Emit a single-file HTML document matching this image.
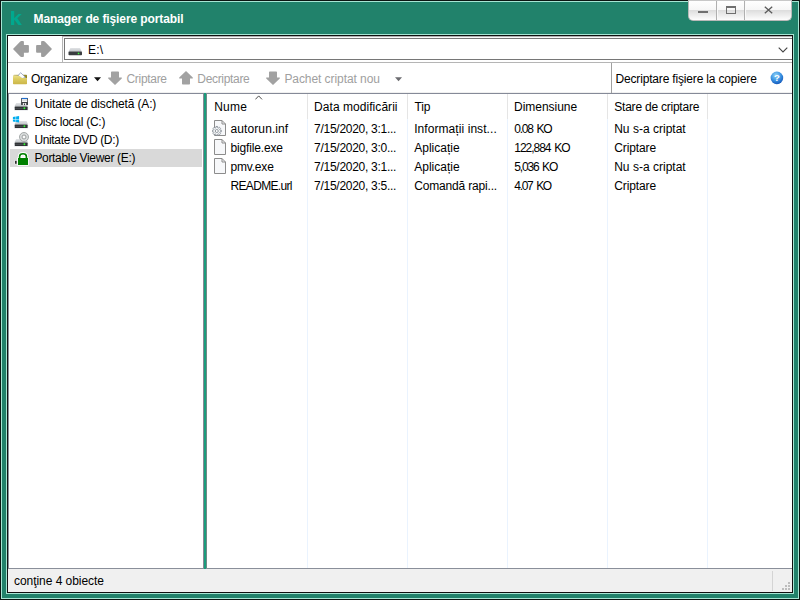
<!DOCTYPE html>
<html lang="ro"><head><meta charset="utf-8"><title>Manager de fişiere portabil</title>
<style>
html,body{margin:0;padding:0}
body{width:800px;height:600px;position:relative;overflow:hidden;background:#21826b;font:12px "Liberation Sans",sans-serif;color:#000}
div,span,svg{position:absolute;box-sizing:border-box}
.t{white-space:pre;line-height:14px;height:14px;font-size:12px}
.outer{left:0;top:0;width:800px;height:600px;border:1px solid #0c1512}
.outer2{left:1px;top:1px;width:798px;height:598px;border:1px solid #a6e6d4}
.frame2{left:6px;top:34px;width:788px;height:560px;border:1px solid #a6e6d4}
.frame{left:7px;top:35px;width:786px;height:558px;border:1px solid #101010;background:#fff}
.client{left:8px;top:36px;width:784px;height:556px;background:#fff;overflow:hidden}
.cap{left:688px;top:0;width:104px;height:21px;border:1px solid #b9b9b9;border-top-color:#c8c8c8;border-radius:0 0 5px 5px;background:linear-gradient(#fff 0,#f6f6f6 48%,#dedede 50%,#fdfdfd 100%)}
.vs{width:2px;background:linear-gradient(90deg,#b0b0b0 50%,#fafafa 50%);top:0;height:19px}
</style></head>
<body>
<div class="outer"></div><div class="outer2"></div>
<div class="frame2"></div><div class="frame"></div>
<div class="client">
  <!-- nav bar (coords relative to client: x-8, y-36) -->
  <div style="left:55px;top:0;width:729px;height:26px;background:#fafafa"></div><div style="left:55px;top:0;width:729px;height:1px;background:#b2b2b2"></div>
  <div style="left:0;top:26px;width:55px;height:1px;background:#b5b5b5"></div>
  <div style="left:54px;top:0;width:1px;height:27px;background:#b4b4b4"></div>
  <div style="left:55px;top:24px;width:729px;height:2px;background:#fff"></div>
  <div style="left:55px;top:26px;width:729px;height:1px;background:#b5b5b5"></div>
  <div style="left:56px;top:2px;width:729px;height:22px;background:#fff;border:1px solid #767676"></div>
  <!-- back/forward arrows -->
  <svg style="left:5px;top:5px" width="16" height="16" viewBox="0 0 16 16"><path d="M0 8 L7 0.7 Q7.7 0 8.4 0 H10 Q10.9 0 10.9 0.9 V4.1 H15 Q15.9 4.1 15.9 5 V10.8 Q15.9 11.7 15 11.7 H10.9 V15 Q10.9 15.9 10 15.9 H8.4 Q7.7 15.9 7 15.2 Z" fill="#9d9d9d"/></svg>
  <svg style="left:28px;top:5px" width="16" height="16" viewBox="0 0 16 16"><path transform="translate(16,0) scale(-1,1)" d="M0 8 L7 0.7 Q7.7 0 8.4 0 H10 Q10.9 0 10.9 0.9 V4.1 H15 Q15.9 4.1 15.9 5 V10.8 Q15.9 11.7 15 11.7 H10.9 V15 Q10.9 15.9 10 15.9 H8.4 Q7.7 15.9 7 15.2 Z" fill="#9d9d9d"/></svg>
  <!-- drive icon in address -->
  <svg style="left:60px;top:11px" width="15" height="9" viewBox="0 0 15 9"><defs><linearGradient id="dg" x1="0" y1="0" x2="0" y2="1"><stop offset="0" stop-color="#e2e4e6"/><stop offset="1" stop-color="#bfc3c7"/></linearGradient></defs><path d="M2.4 0.9 H12 L13.9 4.8 H0.6 Z" fill="url(#dg)"/><rect x="0.5" y="4.6" width="13.5" height="3.6" rx="0.8" fill="#3a3d40"/><rect x="9.8" y="5.7" width="1.5" height="1.5" fill="#3dff3d"/></svg>
  <!-- chevron -->
  <svg style="left:770px;top:11px" width="10" height="6" viewBox="0 0 10 6"><path d="M0.7 0.7 L5 5 L9.3 0.7" fill="none" stroke="#444" stroke-width="1.1"/></svg>

  <!-- toolbar -->
  <div style="left:0;top:56px;width:784px;height:1px;background:#f0f0f0"></div>
  <div style="left:0;top:57px;width:784px;height:1px;background:#858a98"></div>
  <div style="left:603px;top:27px;width:1px;height:30px;background:#a0a0a0"></div>
  <!-- folder icon -->
  <svg style="left:5px;top:35.5px" width="15" height="13" viewBox="0 0 15 13"><defs><linearGradient id="fg" x1="0" y1="0" x2="0" y2="1"><stop offset="0" stop-color="#ebdf86"/><stop offset="0.35" stop-color="#ddcd62"/><stop offset="1" stop-color="#cbb548"/></linearGradient></defs><linearGradient id="fb" x1="0" y1="0" x2="1" y2="0"><stop offset="0" stop-color="#d9d094"/><stop offset="0.5" stop-color="#b5a84a"/><stop offset="1" stop-color="#8c8122"/></linearGradient><path d="M0.3 3.5 Q0.3 2.8 1 2.8 H13.2 Q14 2.8 14 3.6 V11.5 H0.3 Z" fill="url(#fb)"/><path d="M5.2 3.7 L7.6 0.6 L12.4 5.4 L9 6.6 Z" fill="#fff" stroke="#8f9fc0" stroke-width="0.8"/><path d="M0 3.9 H6.6 L8.8 6 H14 V11.6 Q14 12.3 13.3 12.3 H0.7 Q0 12.3 0 11.6 Z" fill="url(#fg)"/></svg>
  <!-- dropdown arrow black -->
  <svg style="left:86px;top:41px" width="7" height="5" viewBox="0 0 7 5"><path d="M0 0.2 H7 L3.5 4.2 Z" fill="#111"/></svg>
  <!-- down arrow (Criptare) -->
  <svg style="left:100px;top:34.5px" width="14" height="14" viewBox="0 0 14 14"><path d="M3.8 0.4 H10.2 Q11 0.4 11 1.2 V6.6 H13.8 V7.6 L7 14 L0.2 7.6 V6.6 H3 V1.2 Q3 0.4 3.8 0.4 Z" fill="#a2a2a2"/></svg>
  <!-- up arrow (Decriptare) -->
  <svg style="left:171px;top:34.5px" width="14" height="14" viewBox="0 0 14 14"><path transform="translate(0,14) scale(1,-1)" d="M3.8 0.4 H10.2 Q11 0.4 11 1.2 V6.6 H13.8 V7.6 L7 14 L0.2 7.6 V6.6 H3 V1.2 Q3 0.4 3.8 0.4 Z" fill="#a2a2a2"/></svg>
  <!-- down arrow (Pachet) -->
  <svg style="left:258px;top:34.5px" width="14" height="14" viewBox="0 0 14 14"><path d="M3.8 0.4 H10.2 Q11 0.4 11 1.2 V6.6 H13.8 V7.6 L7 14 L0.2 7.6 V6.6 H3 V1.2 Q3 0.4 3.8 0.4 Z" fill="#a2a2a2"/></svg>
  <svg style="left:387px;top:41px" width="7" height="5" viewBox="0 0 7 5"><path d="M0 0.2 H7 L3.5 4.2 Z" fill="#6c6c70"/></svg>
  <!-- help icon -->
  <svg style="left:762px;top:34.6px" width="14" height="14" viewBox="0 0 14 14"><defs><radialGradient id="hg" cx="0.42" cy="0.3" r="0.75"><stop offset="0" stop-color="#8fd2f6"/><stop offset="0.55" stop-color="#3a92e2"/><stop offset="1" stop-color="#0e50b4"/></radialGradient></defs><circle cx="6.9" cy="6.9" r="6.3" fill="url(#hg)"/><text x="6.9" y="10.1" text-anchor="middle" font-family="Liberation Sans, sans-serif" font-weight="bold" font-size="9.6" fill="#fff">?</text></svg>

  <!-- tree panel -->
  <div style="left:0;top:58px;width:1px;height:474px;background:#8a8f9a"></div>
  <div style="left:2px;top:113px;width:192px;height:18px;background:#d9d9d9"></div>
  <!-- splitter -->
  <div style="left:195px;top:58px;width:1px;height:474px;background:#8a8795"></div>
  <div style="left:196px;top:57px;width:2px;height:476px;background:#1b9c7c;z-index:2"></div>
  <div style="left:198px;top:58px;width:1px;height:474px;background:#6f8a86"></div>
  <!-- column separators -->
  <div style="left:299px;top:58px;width:1px;height:474px;background:#eaf3fe"></div>
  <div style="left:399px;top:58px;width:1px;height:474px;background:#eaf3fe"></div>
  <div style="left:499px;top:58px;width:1px;height:474px;background:#eaf3fe"></div>
  <div style="left:599px;top:58px;width:1px;height:474px;background:#eaf3fe"></div>
  <div style="left:699px;top:58px;width:1px;height:474px;background:#eaf3fe"></div>
  <div style="left:299px;top:58px;width:1px;height:25px;background:#e5e5e5"></div>
  <div style="left:399px;top:58px;width:1px;height:25px;background:#e5e5e5"></div>
  <div style="left:499px;top:58px;width:1px;height:25px;background:#e5e5e5"></div>
  <div style="left:599px;top:58px;width:1px;height:25px;background:#e5e5e5"></div>
  <div style="left:699px;top:58px;width:1px;height:25px;background:#e5e5e5"></div>
  <!-- sort arrow -->
  <svg style="left:247px;top:59px" width="8" height="5" viewBox="0 0 8 5"><path d="M0.4 4.4 L3.7 0.9 L7 4.4" fill="none" stroke="#505050" stroke-width="1"/></svg>

  <!-- status bar -->
  <div style="left:0;top:532px;width:784px;height:1px;background:#8a8f9a"></div>
  <div style="left:0;top:533px;width:784px;height:23px;background:#f0f0f0"></div>
  <div style="left:764px;top:535px;width:1px;height:20px;background:#d4d4d4"></div>
  <svg style="left:774px;top:546px" width="9" height="9" viewBox="0 0 9 9"><g fill="#bdbdbd"><rect x="6" y="0" width="2" height="2"/><rect x="3" y="3" width="2" height="2"/><rect x="6" y="3" width="2" height="2"/><rect x="0" y="6" width="2" height="2"/><rect x="3" y="6" width="2" height="2"/><rect x="6" y="6" width="2" height="2"/></g></svg>
</div>

<!-- caption buttons -->
<div class="cap">
  <div class="vs" style="left:27px"></div><div class="vs" style="left:55px"></div>
  <div style="left:9px;top:10px;width:10px;height:2px;background:#6f6f6f"></div>
  <div style="left:37px;top:5px;width:10px;height:8px;border:1px solid #6f6f6f;border-top-width:2px"></div>
  <svg style="left:74.8px;top:5.4px" width="9" height="8" viewBox="0 0 9 8"><path d="M0.8 0.8 L8.2 7.2 M8.2 0.8 L0.8 7.2" stroke="#5a5a5a" stroke-width="1.3" fill="none"/></svg>
</div>
<!-- logo K -->
<svg style="left:11px;top:11px" width="11" height="14" viewBox="0 0 11 14"><path d="M-0.2 0 H3.2 V14 H-0.2 Z M3.2 7.2 L7.4 3 H10.7 L6.3 7.3 L10.8 14 H7.4 L3.2 8.6 Z" fill="#00a88e"/></svg>

<!--ICONS_START-->
<!-- tree icons -->
<svg style="left:13px;top:96px" width="16" height="16" viewBox="0 0 16 16">
  <path d="M3.2 7 H13.6 L15 10.6 H1.4 Z" fill="url(#dg)"/><rect x="1.2" y="10.2" width="14" height="4.4" rx="0.9" fill="#dfe2e5"/><rect x="1.8" y="10.6" width="12.8" height="3.4" rx="0.6" fill="#2f3235"/><rect x="2.4" y="11.9" width="7.5" height="0.7" fill="#55595d"/><circle cx="11.4" cy="12.3" r="1" fill="#35f535"/>
  <rect x="8.1" y="1.9" width="6.9" height="7.2" rx="0.5" fill="#3b3e42"/><rect x="8.7" y="1.9" width="5.7" height="1.2" fill="#1f6fd0"/><rect x="8.9" y="3.1" width="5.3" height="2.9" fill="#f4f4f4"/><rect x="8.9" y="4.2" width="5.3" height="0.5" fill="#c9ccd0"/><rect x="9.8" y="7" width="3.4" height="2.1" fill="#e6e6e6"/><rect x="11" y="7.5" width="1" height="1.6" fill="#3b3e42"/>
</svg>
<svg style="left:12px;top:114px" width="17" height="16" viewBox="0 0 17 16">
  <path d="M4.2 7 H14.6 L16 10.6 H2.4 Z" fill="url(#dg)"/><rect x="2.2" y="10.2" width="14" height="4.4" rx="0.9" fill="#dfe2e5"/><rect x="2.8" y="10.6" width="12.8" height="3.4" rx="0.6" fill="#2f3235"/><rect x="3.4" y="11.9" width="7.5" height="0.7" fill="#55595d"/><circle cx="12.4" cy="12.3" r="1" fill="#35f535"/>
  <path d="M0.9 2.9 L3.6 2.5 V5 H0.9 Z M4.1 2.4 L7.1 2 V5 H4.1 Z M0.9 5.5 H3.6 V8 L0.9 7.6 Z M4.1 5.5 H7.1 V8.5 L4.1 8.1 Z" fill="#00adef"/>
</svg>
<svg style="left:13px;top:132px" width="16" height="16" viewBox="0 0 16 16">
  <path d="M3.2 7 H13.6 L15 10.6 H1.4 Z" fill="url(#dg)"/><rect x="1.2" y="10.2" width="14" height="4.4" rx="0.9" fill="#dfe2e5"/><rect x="1.8" y="10.6" width="12.8" height="3.4" rx="0.6" fill="#2f3235"/><rect x="2.4" y="11.9" width="7.5" height="0.7" fill="#55595d"/><circle cx="11.4" cy="12.3" r="1" fill="#35f535"/>
  <circle cx="11" cy="5" r="4.5" fill="#d9dcdc" stroke="#9da1a1" stroke-width="0.9"/><circle cx="11" cy="5" r="2" fill="#eef0f0" stroke="#8d9191" stroke-width="0.8"/><circle cx="11" cy="5" r="1" fill="#fff"/>
</svg>
<svg style="left:13px;top:150px" width="17" height="17" viewBox="0 0 17 17">
  <rect x="1.6" y="10.4" width="2.3" height="3.8" fill="#fff"/><rect x="2" y="10.8" width="1.7" height="3" fill="#2e2e2e"/>
  <path d="M6.6 9 V6.4 Q6.6 3.8 10 3.8 Q13.4 3.8 13.4 6.4 V9 Z" fill="#f4f4f4" stroke="#fff" stroke-width="3.4"/>
  <rect x="4.2" y="7.2" width="11.6" height="8.6" rx="0.8" fill="#fff"/>
  <path d="M6.6 9 V6.4 Q6.6 3.8 10 3.8 Q13.4 3.8 13.4 6.4 V9" fill="none" stroke="#008000" stroke-width="1.6"/>
  <rect x="5" y="8" width="10" height="7" fill="#008000"/>
</svg>
<!-- file icons -->
<svg style="left:212px;top:120px" width="14" height="16" viewBox="0 0 14 16">
  <path d="M2.5 0.5 H10 L13.5 4 V15.5 H2.5 Z" fill="#f7f8fa" stroke="#8c8c8c"/><path d="M10 0.5 V4 H13.5" fill="none" stroke="#8c8c8c"/>
  <g transform="translate(4.8,11)"><path d="M4.53 -0.79 L4.53 0.79 L3.29 0.85 L2.93 1.73 L3.76 2.65 L2.65 3.76 L1.73 2.93 L0.85 3.29 L0.79 4.53 L-0.79 4.53 L-0.85 3.29 L-1.73 2.93 L-2.65 3.76 L-3.76 2.65 L-2.93 1.73 L-3.29 0.85 L-4.53 0.79 L-4.53 -0.79 L-3.29 -0.85 L-2.93 -1.73 L-3.76 -2.65 L-2.65 -3.76 L-1.73 -2.93 L-0.85 -3.29 L-0.79 -4.53 L0.79 -4.53 L0.85 -3.29 L1.73 -2.93 L2.65 -3.76 L3.76 -2.65 L2.93 -1.73 L3.29 -0.85 Z" fill="#f3f5f7" stroke="#7c848d" stroke-width="0.8" stroke-linejoin="round"/><circle r="1.5" fill="#fff" stroke="#7c848d" stroke-width="0.8"/></g>
</svg>
<svg style="left:214px;top:139px" width="12" height="16" viewBox="0 0 12 16"><path d="M0.5 0.5 H8 L11.5 4 V15.5 H0.5 Z" fill="#f7f8fa" stroke="#8c8c8c"/><path d="M8 0.5 V4 H11.5" fill="none" stroke="#8c8c8c"/></svg>
<svg style="left:214px;top:158px" width="12" height="16" viewBox="0 0 12 16"><path d="M0.5 0.5 H8 L11.5 4 V15.5 H0.5 Z" fill="#f7f8fa" stroke="#8c8c8c"/><path d="M8 0.5 V4 H11.5" fill="none" stroke="#8c8c8c"/></svg>
<!--ICONS_END-->
<span class="t" style="left:33.5px;top:12px;letter-spacing:-0.1px;font-weight:bold;color:#fff">Manager de fişiere portabil</span>
<span class="t" style="left:88px;top:43px;letter-spacing:0.16px;">E:\</span>
<span class="t" style="left:31px;top:72px;letter-spacing:-0.26px;">Organizare</span>
<span class="t" style="left:126.5px;top:72px;letter-spacing:-0.31px;color:#a0a0a0">Criptare</span>
<span class="t" style="left:197.3px;top:72px;letter-spacing:-0.32px;color:#a0a0a0">Decriptare</span>
<span class="t" style="left:284.4px;top:72px;letter-spacing:-0.07px;color:#a0a0a0">Pachet criptat nou</span>
<span class="t" style="left:615.5px;top:72px;letter-spacing:-0.17px;">Decriptare fişiere la copiere</span>
<span class="t" style="left:34.4px;top:97px;letter-spacing:-0.15px;">Unitate de dischetă (A:)</span>
<span class="t" style="left:34.4px;top:115px;letter-spacing:-0.26px;">Disc local (C:)</span>
<span class="t" style="left:34.4px;top:133px;letter-spacing:-0.35px;">Unitate DVD (D:)</span>
<span class="t" style="left:34.4px;top:151px;letter-spacing:-0.32px;">Portable Viewer (E:)</span>
<span class="t" style="left:214.2px;top:100px;letter-spacing:0.26px;">Nume</span>
<span class="t" style="left:314.1px;top:100px;letter-spacing:0.05px;">Data modificării</span>
<span class="t" style="left:414.4px;top:100px;letter-spacing:-0.12px;">Tip</span>
<span class="t" style="left:514.1px;top:100px;letter-spacing:-0.04px;">Dimensiune</span>
<span class="t" style="left:614.3px;top:100px;letter-spacing:-0.23px;">Stare de criptare</span>
<span class="t" style="left:230.5px;top:122px;letter-spacing:0.1px;">autorun.inf</span>
<span class="t" style="left:314.1px;top:122px;letter-spacing:-0.28px;">7/15/2020, 3:1...</span>
<span class="t" style="left:414.2px;top:122px;letter-spacing:0.07px;">Informații inst...</span>
<span class="t" style="left:514.3px;top:122px;letter-spacing:-1.24px;word-spacing:1.6px">0.08 KO</span>
<span class="t" style="left:614.2px;top:122px;letter-spacing:0.01px;">Nu s-a criptat</span>
<span class="t" style="left:230.5px;top:141px;letter-spacing:-0.16px;">bigfile.exe</span>
<span class="t" style="left:314.1px;top:141px;letter-spacing:-0.28px;">7/15/2020, 3:0...</span>
<span class="t" style="left:414.2px;top:141px;letter-spacing:0.02px;">Aplicație</span>
<span class="t" style="left:514.3px;top:141px;letter-spacing:-1.03px;word-spacing:1.6px">122,884 KO</span>
<span class="t" style="left:614.2px;top:141px;letter-spacing:-0.1px;">Criptare</span>
<span class="t" style="left:230.5px;top:160px;letter-spacing:-0.19px;">pmv.exe</span>
<span class="t" style="left:314.1px;top:160px;letter-spacing:-0.28px;">7/15/2020, 3:1...</span>
<span class="t" style="left:414.2px;top:160px;letter-spacing:0.02px;">Aplicație</span>
<span class="t" style="left:514.3px;top:160px;letter-spacing:-1.19px;word-spacing:1.6px">5,036 KO</span>
<span class="t" style="left:614.2px;top:160px;letter-spacing:0.01px;">Nu s-a criptat</span>
<span class="t" style="left:230.5px;top:179px;letter-spacing:-0.67px;">README.url</span>
<span class="t" style="left:314.1px;top:179px;letter-spacing:-0.28px;">7/15/2020, 3:5...</span>
<span class="t" style="left:414.2px;top:179px;letter-spacing:-0.17px;">Comandă rapi...</span>
<span class="t" style="left:514.3px;top:179px;letter-spacing:-1.29px;word-spacing:1.6px">4.07 KO</span>
<span class="t" style="left:614.2px;top:179px;letter-spacing:-0.1px;">Criptare</span>
<span class="t" style="left:14px;top:574px;letter-spacing:-0.05px;">conţine 4 obiecte</span>
</body></html>
